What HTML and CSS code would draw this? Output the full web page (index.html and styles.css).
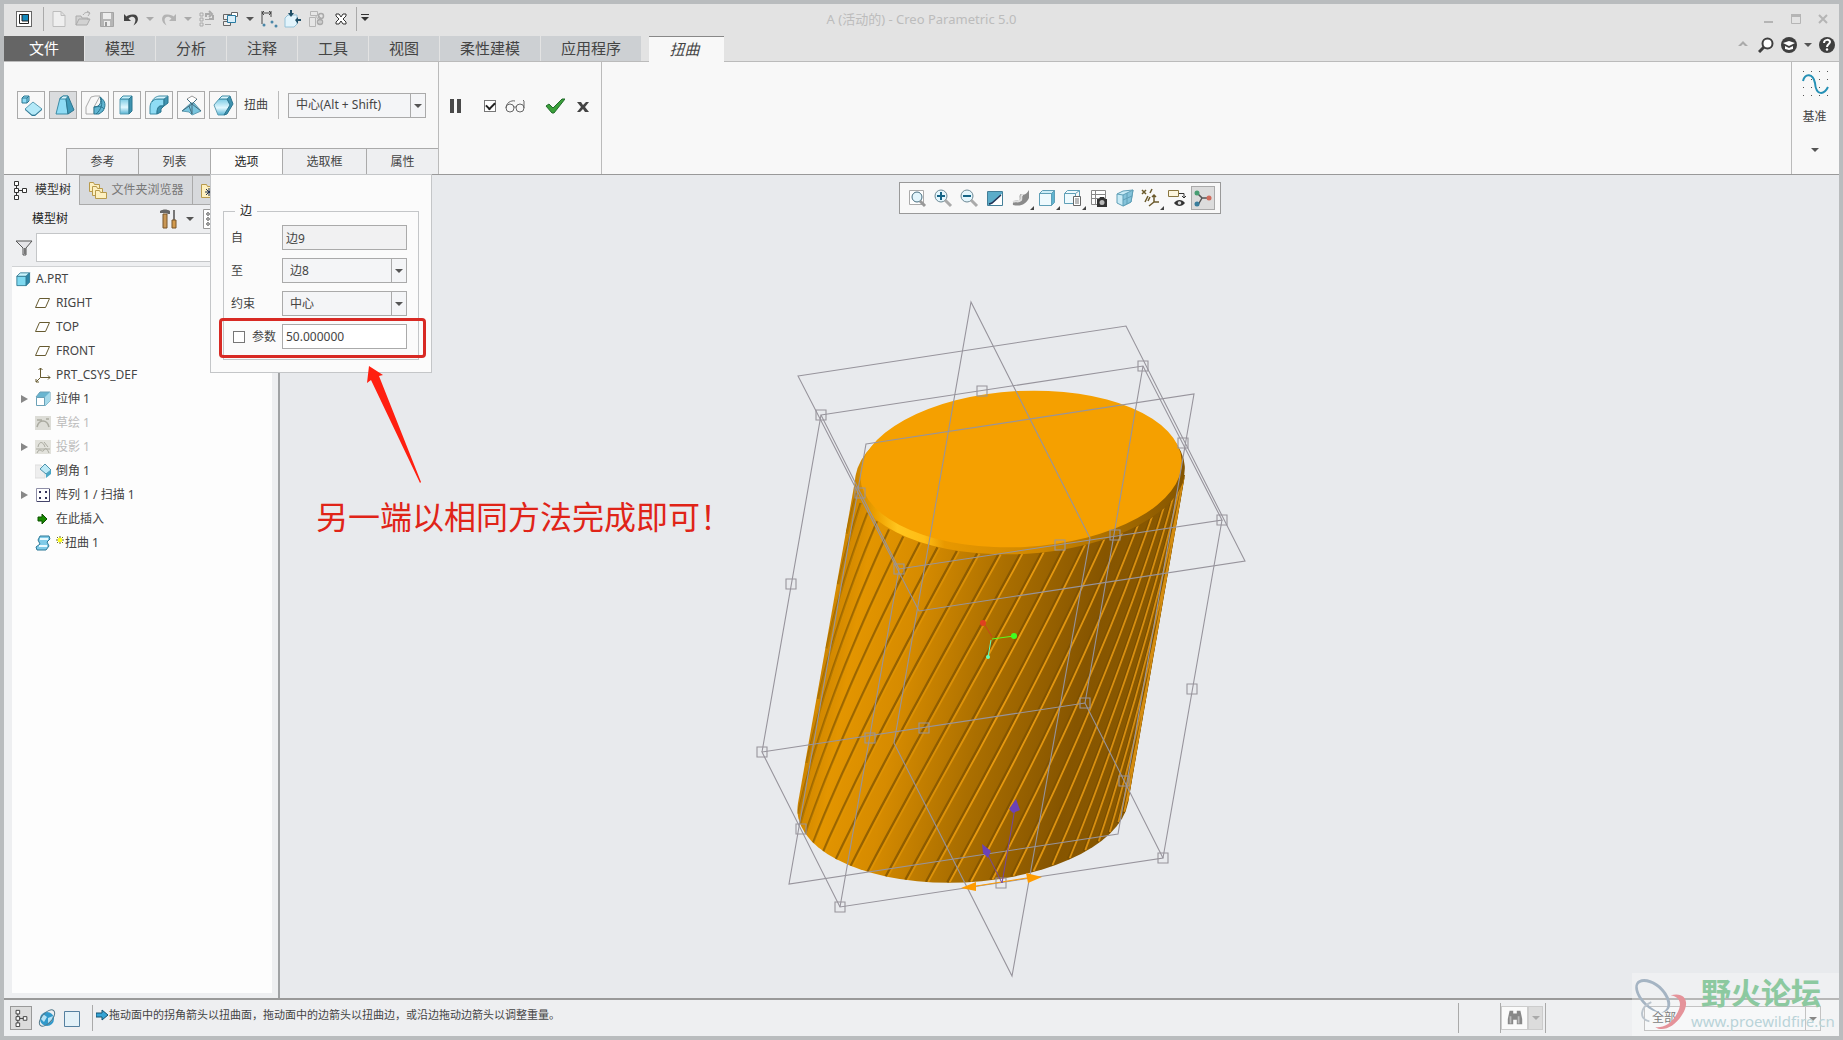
FILE: index.html
```html
<!DOCTYPE html>
<html lang="zh-CN">
<head>
    <meta charset="UTF-8">
    <meta name="viewport" content="width=device-width, initial-scale=1.0">
    <title>A (活动的) - Creo Parametric 5.0</title>
    <link rel="stylesheet" href="styles.css">
</head>
<body>
    <header class="titlebar">
        <div class="quick-access">
            <button class="qa-btn logo" aria-label="Creo"><svg viewBox="0 0 18 18"><rect x="1.500" y="1.500" width="15" height="15" fill="#fff" stroke="#666"/><path d="M4 4h10v10H4z" fill="#222"/><path d="M7 4h7v7H7z" fill="#1489bd"/><path d="M4 4h3v7h7v3H4z" fill="#fff"/><path d="M4.500 4.500h9v9h-9zM7 4v7h7" fill="none" stroke="#222"/></svg></button>
            <span class="sep"></span>
            <button class="qa-btn" aria-label="新建"><svg viewBox="0 0 18 18"><path d="M3 1.500h8l4 4v11H3zM11 1.500v4h4" fill="#efefef" stroke="#bdbdbd"/></svg></button>
            <button class="qa-btn" aria-label="打开"><svg viewBox="0 0 18 18"><path d="M2 15V6h5l1 2h6v2M2 15l3-6h11l-3 6z" fill="#d2d2d2" stroke="#aaa"/><path d="M9 5c2-3 4-3 6-2M13 1l3 2-2 3" fill="none" stroke="#aaa"/></svg></button>
            <button class="qa-btn" aria-label="保存"><svg viewBox="0 0 18 18"><path d="M2.500 2.500h13v14h-13z" fill="#b6b6b6" stroke="#a5a5a5"/><path d="M5 3h8v6H5zM6 11h6v5H6z" fill="#ededed"/><path d="M7 12h2v4H7z" fill="#999"/></svg></button>
            <button class="qa-btn" aria-label="撤消"><svg viewBox="0 0 18 18"><path d="M2 4v7h7L6.500 8.500c4-4 9-1 6 5l-1 2c7-4 5-12-1-11-3 0-5 1-6 2z" fill="#444"/></svg></button>
            <button class="drop pale" aria-label="撤消列表"></button>
            <button class="qa-btn" aria-label="重做"><svg viewBox="0 0 18 18"><path d="M16 4v7H9l2.500-2.500c-4-4-9-1-6 5l1 2c-7-4-5-12 1-11 3 0 5 1 6 2z" fill="#b3b3b3"/></svg></button>
            <button class="drop pale" aria-label="重做列表"></button>
            <button class="qa-btn" aria-label="重新生成"><svg viewBox="0 0 18 18"><path d="M2 3h3v3H2zM2 8h3v3H2zM2 13h3v3H2zM7 9.500h6M7 14.500h6" fill="none" stroke="#aaa"/><path d="M8 7V4h4M11 1l3 3-3 3M15 5v4h-4" fill="none" stroke="#aaa" stroke-width="2"/></svg></button>
            <button class="qa-btn" aria-label="窗口"><svg viewBox="0 0 18 18"><path d="M1.500 4.500h7v5h-7zM1.500 11.500h7v4h-7z" fill="#eee" stroke="#666"/><path d="M9.500 2.500h6v4h-6z" fill="#fff" stroke="#666"/><path d="M5.500 5.500h8v7h-8z" fill="#d9effa" stroke="#287ba2"/></svg></button>
            <button class="drop" aria-label="窗口列表"></button>
            <button class="qa-btn" aria-label="测量"><svg viewBox="0 0 18 18"><path d="M2 1v13M11 1v6M2 3h9M4 1L2 3l2 2M9 1l2 2-2 2" fill="none" stroke="#444"/><g fill="#4b87a8"><circle cx="4" cy="15" r="1.500"/><circle cx="12" cy="12" r="1.500"/><circle cx="16" cy="16" r="1.500"/></g></svg></button>
            <button class="qa-btn" aria-label="插入"><svg viewBox="0 0 18 18"><path d="M1 8l3-3h9v9l-3 3H1z" fill="#e2f4fc" stroke="#95c2d8"/><path d="M6 0v3H4l3 4 3-4H8V0zM17 9h-3V7l-3 3 3 4v-3h3z" fill="#1f4e66"/></svg></button>
            <button class="qa-btn" aria-label="参考"><svg viewBox="0 0 18 18"><path d="M2.500 1.500h7v4h-7zM1.500 7.500h6v9h-6zM9 12l3-3v6zM10 5l4 4M7 5l3 4" fill="#e6e6e6" stroke="#b5b5b5"/><circle cx="13" cy="6" r="2.500" fill="none" stroke="#aaa" stroke-width="1.500"/><circle cx="12" cy="12" r="2.500" fill="none" stroke="#aaa" stroke-width="1.500"/></svg></button>
            <button class="qa-btn" aria-label="关闭"><svg viewBox="0 0 18 18"><path d="M4 4h3l2 3 2-3h3v2l-3 3 3 3v2h-3l-2-3-2 3H4v-2l3-3-3-3z" fill="#fff" stroke="#333"/></svg></button>
            <span class="sep"></span>
            <button class="drop line" aria-label="自定义"></button>
        </div>
        <h1 class="title">A (活动的) - Creo Parametric 5.0</h1>
        <div class="window-buttons">
            <button aria-label="最小化"><svg viewBox="0 0 12 12"><path d="M1 8h9v2H1z" fill="#b5b5b5"/></svg></button>
            <button aria-label="最大化"><svg viewBox="0 0 12 12"><path d="M1.500 2.500h9v8h-9z" fill="none" stroke="#b5b5b5"/><path d="M1 1h10v3H1z" fill="#b5b5b5"/></svg></button>
            <button aria-label="关闭窗口"><svg viewBox="0 0 12 12"><path d="M2 2l8 8M10 2l-8 8" stroke="#b5b5b5" stroke-width="2"/></svg></button>
        </div>
    </header>

    <nav class="tabs">
        <button class="tab file">文件</button>
        <button class="tab">模型</button>
        <button class="tab">分析</button>
        <button class="tab">注释</button>
        <button class="tab">工具</button>
        <button class="tab">视图</button>
        <button class="tab wide">柔性建模</button>
        <button class="tab wide">应用程序</button>
        <button class="tab active">扭曲</button>
        <div class="help">
            <button aria-label="折叠"><svg viewBox="0 0 16 16"><path d="M3 9l5-5 5 5h-3L8 7 6 9z" fill="#aaa"/></svg></button>
            <button aria-label="搜索"><svg viewBox="0 0 16 16"><circle cx="9.500" cy="6.500" r="5" fill="#fff" stroke="#3f3f3f" stroke-width="2"/><path d="M6 10l-5 5" stroke="#3f3f3f" stroke-width="3"/></svg></button>
            <button aria-label="学习"><svg viewBox="0 0 16 16"><circle cx="8" cy="8" r="8" fill="#3f3f3f"/><path d="M2 6l6-2 6 2-6 3zM4 9l4 2 4-2v3l-4 1-4-1z" fill="#fff"/></svg></button>
            <button class="drop" aria-label="学习列表"></button>
            <button aria-label="帮助"><svg viewBox="0 0 16 16"><circle cx="8" cy="8" r="8" fill="#3f3f3f"/><path d="M5 6c0-4 6-4 6-1 0 2-3 2-3 5" fill="none" stroke="#fff" stroke-width="2"/><circle cx="8" cy="12.500" r="1.200" fill="#fff"/></svg></button>
        </div>
    </nav>

    <section class="ribbon">
        <div class="group warp">
            <div class="tools">
                <button class="tool" aria-label="变换"><svg viewBox="0 0 26 26"><path d="M4 6l2-2h5v5l-2 2H4z" fill="#8fdcf5" stroke="#2b7690"/><path d="M4 6h5v5M9 6l2-2" fill="none" stroke="#2b7690"/><path d="M7 17l8-7 9 7-7 6h-3z" fill="#b4e9f8" stroke="#5d9db3"/><path d="M7 17v1l7 6h3l7-6v-1l-7 6h-3z" fill="#2d7896"/></svg></button>
                <button class="tool on" aria-label="扭曲"><svg viewBox="0 0 26 26"><path d="M6 22l4-16 3-2h5l-2 3 2 15z" fill="#8fdcf5" stroke="#3d8ba5"/><path d="M16 7l2-3 6 14-6 4z" fill="#3f9ab9" stroke="#2b7690"/><path d="M10 7l3-3h5l-2 3z" fill="#d8f5fd" stroke="#3d8ba5"/></svg></button>
                <button class="tool" aria-label="骨架"><svg viewBox="0 0 26 26"><path d="M4 15l5-10 4-1h5l-6 11v7H4z" fill="#f8f8f8" stroke="#aaa"/><path d="M18 5c6 4 6 9 3 14l-4 3h-5v-7c6 0 8-5 6-10z" fill="#62b6d2" stroke="#2b7690"/><path d="M12 15c6-1 9 0 10 2M19 6c2 6 0 12-5 16" fill="none" stroke="#2b7690"/></svg></button>
                <button class="tool" aria-label="拉伸"><svg viewBox="0 0 26 26"><path d="M6 7h9v15H6z" fill="url(#shine)" stroke="#5d9db3"/><path d="M6 7l3-3h9l-3 3z" fill="#c5f0fb" stroke="#3d8ba5"/><path d="M15 7l3-3v15l-3 3z" fill="#3f93b0" stroke="#2b7690"/></svg></button>
                <button class="tool" aria-label="折弯"><svg viewBox="0 0 26 26"><path d="M4 22v-6c0-6 3-9 8-9h6v7h-3c-3 0-4 3-4 8z" fill="#8fdcf5" stroke="#3d8ba5"/><path d="M18 7l4-3v7l-4 3zM11 22c0-5 1-8 4-8h3l-3 3v3z" fill="#3f93b0" stroke="#2b7690"/><path d="M6 10c1-4 5-6 8-6h8l-4 3h-6c-3 0-5 1-6 3z" fill="#d8f5fd" stroke="#3d8ba5"/></svg></button>
                <button class="tool" aria-label="扭转"><svg viewBox="0 0 26 26"><path d="M9 7l5-3 5 3-5 5z" fill="#fff" stroke="#999"/><path d="M4 19l9-8 3 0 7 8-9 4-3-3z" fill="#79c5de" stroke="#5d9db3"/><path d="M9 7l5 5v10M19 7l-5 5 9 7M14 12L4 19M11 14l3 8" fill="none" stroke="#436d7e"/></svg></button>
                <button class="tool" aria-label="雕刻"><svg viewBox="0 0 26 26"><path d="M4 13l5-6h8l4 6-4 8-3 2H8z" fill="url(#shine)" stroke="#5d9db3"/><path d="M17 7l3-3 3 8-6 10-3 1 6-10z" fill="#3f93b0" stroke="#2b7690"/><path d="M9 7l3-3h8l-3 3z" fill="#d8f5fd" stroke="#3d8ba5"/></svg></button>
                <span class="tool-label">扭曲</span>
                <span class="tool-sep"></span>
                <span class="combo main-combo"><select aria-label="扭曲方式"><option>中心(Alt + Shift)</option></select></span>
            </div>
            <div class="subtabs">
                <button class="subtab">参考</button>
                <button class="subtab">列表</button>
                <div class="subtab-holder">
                    <button class="subtab active">选项</button>
                    <div class="popup">
                        <fieldset>
                            <legend>边</legend>
                            <label for="from">自</label>
                            <input id="from" class="field readonly" type="text" value="边9" readonly>
                            <label for="to">至</label>
                            <span class="combo"><select id="to"><option>边8</option></select></span>
                            <label for="constraint">约束</label>
                            <span class="combo"><select id="constraint"><option>中心</option></select></span>
                            <label class="check" for="use-param"><input id="use-param" type="checkbox">参数</label>
                            <input class="field" type="text" value="50.000000" aria-label="参数值">
                        </fieldset>
                        <div class="red-box"></div>
                    </div>
                </div>
                <button class="subtab three">选取框</button>
                <button class="subtab">属性</button>
            </div>
        </div>
        <div class="group confirm">
            <button aria-label="暂停"><svg viewBox="0 0 20 20"><path d="M4 3h4v14H4zM11 3h4v14h-4z" fill="#4a4a4a"/></svg></button>
            <label class="preview"><input type="checkbox" checked aria-label="预览"><svg viewBox="0 0 20 20"><g fill="none" stroke="#666"><circle cx="5" cy="12" r="4"/><circle cx="15" cy="12" r="4"/><path d="M9 11h2M1 12c0-5 5-8 9-7M19 12V5l-1-1"/></g></svg></label>
            <button class="ok" aria-label="确定"><svg viewBox="0 0 20 20"><path d="M1 10l3-2 4 4 9-9h3L9 17H7z" fill="#3aa03a" stroke="#216b2b"/></svg></button>
            <button aria-label="取消"><svg viewBox="0 0 20 20"><path d="M4 6h4l2 3 3-3h3l-4 5 4 5h-4l-2-3-3 3H4l4-5z" fill="#444"/></svg></button>
        </div>
        <div class="group datum">
            <svg class="datum-icon" viewBox="0 0 28 30"><g fill="#555"><path d="M2 2h1v1H2zM10 2h1v1h-1zM18 2h1v1h-1zM26 2h1v1h-1zM2 10h1v1H2zM10 10h1v1h-1zM18 10h1v1h-1zM26 10h1v1h-1zM2 18h1v1H2zM10 18h1v1h-1zM18 18h1v1h-1zM26 18h1v1h-1zM2 26h1v1H2zM10 26h1v1h-1zM18 26h1v1h-1zM26 26h1v1h-1z"/></g><path d="M2 12c2-8 10-8 12 2 1 13 9 12 13 4" fill="none" stroke="#2590b5" stroke-width="2"/></svg>
            <button class="datum-btn">基准</button>
            <button class="drop" aria-label="基准列表"></button>
        </div>
    </section>

    <main class="work">
        <aside class="side">
            <div class="side-tabs">
                <button class="side-tab active"><svg viewBox="0 0 16 20"><use href="#tree-icon"/></svg>模型树</button>
                <button class="side-tab folder"><svg viewBox="0 0 20 20"><g fill="#fdf0c0" stroke="#b89a4c"><path d="M1.500 2.500h4l1 2h5v7h-10z"/><path d="M4.500 6.500h4l1 2h5v7h-10z"/><path d="M7.500 10.500h4l1 2h6v6h-11z"/></g></svg>文件夹浏览器</button>
                <button class="side-tab last" aria-label="收藏夹"><svg viewBox="0 0 20 20"><path d="M.500 4.500h5l1 2h9v11h-15z" fill="#fdf0c0" stroke="#b89a4c"/><path d="M8 8v8M4 12h8M5 9l6 6M11 9l-6 6" stroke="#235"/></svg></button>
            </div>
            <div class="side-head">
                <h2>模型树</h2>
                <button aria-label="设置"><svg viewBox="0 0 18 20"><path d="M1 2c3-2 7-2 10 0v3H9L7 4H1z" fill="#666"/><path d="M4 5h4v14H4z" fill="#c99755" stroke="#76542a"/><path d="M14 1h2v10h-2z" fill="#777"/><path d="M13 11h4v8h-4z" fill="#d39a4c" stroke="#76542a"/></svg></button>
                <button class="drop" aria-label="设置列表"></button>
                <button class="show" aria-label="显示"><svg viewBox="0 0 18 20"><path d="M.500.500h16v19H.500z" fill="#fff" stroke="#999"/><g fill="none" stroke="#555"><circle cx="5" cy="5" r="1.300"/><circle cx="5" cy="10" r="1.300"/><circle cx="5" cy="15" r="1.300"/></g></svg></button>
            </div>
            <div class="filter">
                <svg viewBox="0 0 18 18"><path d="M1 2h16l-6 7v7H8V9z" fill="#e4e4e8" stroke="#555"/><path d="M9 9h2v6H9z" fill="#777"/></svg>
                <input type="text" aria-label="过滤">
            </div>
            <ul class="tree">
                <li class="root"><svg viewBox="0 0 16 16"><use href="#cube" transform="translate(1 1) scale(.85)"/></svg>A.PRT</li>
                <li><svg viewBox="0 0 16 16"><use href="#plane"/></svg>RIGHT</li>
                <li><svg viewBox="0 0 16 16"><use href="#plane"/></svg>TOP</li>
                <li><svg viewBox="0 0 16 16"><use href="#plane"/></svg>FRONT</li>
                <li><svg viewBox="0 0 16 16"><path d="M5.500 1v9.500H15M5.500 10.500L1 15M3.500 3l2-2 2 2M13 8.500l2 2-2 2M1 12v3h3" fill="none" stroke="#665a30"/></svg>PRT_CSYS_DEF</li>
                <li class="parent"><svg viewBox="0 0 16 16"><path d="M1 6l4-5h10v9l-5 5z" fill="#69b5d0" stroke="#6ba1b7"/><path d="M1.500 6.500h8v8h-8z" fill="#fff" stroke="#6ba1b7"/><path d="M10 6l5-5v9l-5 5z" fill="#a5d9ea"/></svg>拉伸 1</li>
                <li class="muted"><svg viewBox="0 0 16 16"><path d="M0 1h16v14H0z" fill="#ddddd7"/><path d="M2 12c2-8 10-8 12 0M2 5h5M11 4h3" fill="none" stroke="#aaaaa0" stroke-width="1.500"/></svg>草绘 1</li>
                <li class="parent muted"><svg viewBox="0 0 16 16"><path d="M0 1h16v14H0z" fill="#e2e2dc"/><path d="M3 8c1-6 5-6 7 0M2 14c3-7 5 1 7-3s4 1 5 3M9 3l4 5M1 10h14" fill="none" stroke="#aaaaa0"/></svg>投影 1</li>
                <li><svg viewBox="0 0 16 16"><path d="M0 2h6l4 4v9H0z" fill="#eee" stroke="#ddd"/><path d="M5 6l5-5 6 6-5 4z" fill="#bdeaf7" stroke="#4d93ad"/><path d="M11 11l5-4v4l-5 4z" fill="#4ba7c6"/></svg>倒角 1</li>
                <li class="parent"><svg viewBox="0 0 16 16"><path d="M1.500 1.500h13v13h-13z" fill="#fff" stroke="#8d8da6"/><path d="M14.500 2v12.500H2" fill="none" stroke="#44446a"/><path d="M4 4h2v2H4zM10 4h2v2h-2zM4 10h2v2H4zM10 10h2v2h-2z" fill="#34345c"/></svg>阵列 1 / 扫描 1</li>
                <li><svg viewBox="0 0 16 16"><path d="M3 6h4V3l5 5-5 5v-3H3z" fill="#188a00" stroke="#0c5200"/></svg>在此插入</li>
                <li><svg viewBox="0 0 16 16"><path d="M5 1h9l1 3-3 3 2 4-3 4H2l-1-3 4-3-2-4z" fill="#7fcbe8" stroke="#2d7896"/><path d="M5 4h8M4 11h8" stroke="#e8faff" stroke-width="2"/></svg><svg class="star" viewBox="0 0 8 8"><path d="M4 0v8M0 4h8M1 1l6 6M7 1L1 7" stroke="#77770a"/><path d="M2 2h4v4H2z" fill="#ffff20"/></svg>扭曲 1</li>
            </ul>
        </aside>

        <section class="canvas">
            <svg class="scene" viewBox="280 175 1559 823" role="img" aria-label="圆柱模型">
                <defs>
                    <linearGradient id="shine" x1="0" y1="0" x2="0" y2="1"><stop offset="0" stop-color="#7ccbe4"/><stop offset=".55" stop-color="#e2f8ff"/><stop offset="1" stop-color="#57b4d4"/></linearGradient>
                    <linearGradient id="body-fill" gradientUnits="userSpaceOnUse" x1="856" y1="475" x2="1175" y2="530">
                        <stop offset="0" stop-color="#ce8500"/><stop offset=".08" stop-color="#e39500"/><stop offset=".25" stop-color="#d68b00"/>
                        <stop offset=".5" stop-color="#ab6f00"/><stop offset=".8" stop-color="#865500"/><stop offset="1" stop-color="#8a5900"/>
                    </linearGradient>
                    <linearGradient id="rim-fill" gradientUnits="userSpaceOnUse" x1="855" y1="0" x2="1186" y2="0">
                        <stop offset="0" stop-color="#c98300"/><stop offset=".06" stop-color="#efa200"/><stop offset=".12" stop-color="#ffc51e"/>
                        <stop offset=".2" stop-color="#ffbd15"/><stop offset=".26" stop-color="#e89800"/><stop offset=".55" stop-color="#cf8700"/>
                        <stop offset=".8" stop-color="#a26900"/><stop offset="1" stop-color="#835400"/>
                    </linearGradient>
                    <linearGradient id="groove" gradientUnits="userSpaceOnUse" x1="856" y1="475" x2="1175" y2="530">
                        <stop offset="0" stop-color="#a06900"/><stop offset=".5" stop-color="#875700"/><stop offset="1" stop-color="#774c00"/>
                    </linearGradient>
                    <linearGradient id="ridge" gradientUnits="userSpaceOnUse" x1="856" y1="475" x2="1175" y2="530">
                        <stop offset="0" stop-color="#e89a00" stop-opacity=".3"/><stop offset=".35" stop-color="#e89a0a" stop-opacity=".6"/>
                        <stop offset=".55" stop-color="#e89a10"/><stop offset="1" stop-color="#d48c10"/>
                    </linearGradient>
                    <clipPath id="body-clip"><path d="M856 475L798 803A165 79 -3 0 0 1128 803L1185 475A165 79 -3 0 1 856 475z"/></clipPath>
                    <g id="cube"><path d="M1 5h11v11H1z" fill="#7fd9f0" stroke="#2b7690"/><path d="M1 5l4-4h11l-4 4z" fill="#c9f3fb" stroke="#2b7690"/><path d="M12 5l4-4v11l-4 4z" fill="#2d86a8" stroke="#2b7690"/></g>
                    <path id="plane" d="M4.500 3.500h10l-4 9h-10z" fill="#fff" stroke="#665a30"/>
                    <path id="tree-icon" d="M2.500 1.500h4v4h-4zM2.500 8.500h4v4h-4zM2.500 15.500h4v4h-4zM10.500 8.500h4v4h-4zM4.500 5.500v3M4.500 12.500v3M6.500 10.500h4" fill="#fff" stroke="#333"/>
                </defs>
                <path d="M856 475L798 803A165 79 -3 0 0 1128 803L1185 475z" fill="url(#body-fill)"/>
                <ellipse cx="1020" cy="475" rx="165" ry="79" transform="rotate(-3 1020 475)" fill="url(#rim-fill)"/>
                <g clip-path="url(#body-clip)" fill="none">
                    <path id="grooves" stroke="url(#groove)" stroke-width="2.400"/>
                    <path id="ridges" stroke="url(#ridge)" stroke-width="1.800"/>
                </g>
                <ellipse cx="1021" cy="469" rx="161" ry="78" transform="rotate(-3 1021 469)" fill="#f5a000"/>
                <!-- datum planes and warp box -->
                <g fill="none" stroke="#97949c" stroke-width="1.100">
                    <path d="M798 376L1126 326L1245 561L919 611z"/>
                    <path d="M866 444L1194 394L1118 834L789 884z"/>
                    <path d="M971 302L1090 538L1012 976L894 743z"/>
                    <path d="M821 415L1143 366L1222 520L899 569z"/>
                    <path d="M762 752L1085 703L1163 858L840 907z"/>
                    <path d="M821 415L762 752M1143 366L1085 703M1222 520L1163 858M899 569L840 907"/>
                    <path id="handles"/>
                </g>
                <path d="M970 887L1033 877" stroke="#ff9c00"/>
                <path d="M961 888l15-6v9zM1042 877l-16-4 2 10z" fill="#ff9c00"/>
                <path d="M1002 883L1015 808M1002 883L988 855" stroke="#7446a0"/>
                <path d="M1016 799l4 11-7 3-4-4zM982 844l9 7-3 7-5-5z" fill="#6b42b8"/>
                <path d="M983 622l9 15" stroke="#c8451c"/><circle cx="983" cy="623" r="3" fill="#e04020"/>
                <path d="M1014 636l-22 3" stroke="#5aff20"/><circle cx="1014" cy="636" r="3" fill="#40ff20"/>
                <path d="M991 640l-3 17" stroke="#60ffb8"/><circle cx="988" cy="657" r="2" fill="#60ffb8"/>
            </svg>

            <div class="view-bar">
                <button aria-label="重新调整"><svg viewBox="0 0 20 20"><path d="M2.500 2.500h14v14h-14z" fill="#fff" stroke="#aaa"/><circle cx="10" cy="9" r="5" fill="#e4f6fd" stroke="#456c7e"/><path d="M13 13l5 5" stroke="#999" stroke-width="3"/></svg></button>
                <button aria-label="放大"><svg viewBox="0 0 20 20"><circle cx="8" cy="8" r="6" fill="#e4f6fd" stroke="#6d8995"/><path d="M12 12l6 6" stroke="#aaa" stroke-width="3"/><path d="M8 4v8M4 8h8" stroke="#146486" stroke-width="2"/></svg></button>
                <button aria-label="缩小"><svg viewBox="0 0 20 20"><circle cx="8" cy="8" r="6" fill="#e4f6fd" stroke="#6d8995"/><path d="M12 12l6 6" stroke="#aaa" stroke-width="3"/><path d="M4 8h8" stroke="#146486" stroke-width="2"/></svg></button>
                <button aria-label="重画"><svg viewBox="0 0 20 20"><path d="M2.500 3.500h15v14h-15z" fill="#e9f6fb" stroke="#447f98"/><path d="M3 4h14v2L5 17H3z" fill="#5cacc9"/><path d="M17 6v11H6z" fill="#fff"/><path d="M16 7L7 15l-3 1" fill="none" stroke="#235" stroke-width="1.500"/></svg></button>
                <button class="more" aria-label="渲染"><svg viewBox="0 0 20 20"><path d="M10 6c4 2 6-1 8-4v8c-3 6-8 9-16 7-1-4 3-6 6-4 2-3-1-5 2-7z" fill="#8a8a8a"/><path d="M2 14c3-2 5 1 8-2 1-2-1-5 2-5" stroke="#e0e0e0" stroke-width="2" fill="none"/></svg></button>
                <button class="more" aria-label="显示样式"><svg viewBox="0 0 20 20"><path d="M2.500 5.500h12v12h-12z" fill="#eefafe" stroke="#5f9fb7"/><path d="M2.500 5.500l3-3h12l-3 3z" fill="#cdeef8" stroke="#5f9fb7"/><path d="M14.500 5.500l3-3v12l-3 3z" fill="#5fb3cf" stroke="#5f9fb7"/></svg></button>
                <button class="more" aria-label="已保存方向"><svg viewBox="0 0 20 20"><path d="M1.500 5.500h11v10h-11zM1.500 5.500l3-3h12l-4 3M16.500 2.500v8" fill="#eefafe" stroke="#5f9fb7"/><path d="M10.500 8.500h7v9h-7z" fill="#fff" stroke="#666"/><path d="M12 11h4M12 13h4M12 15h4" stroke="#777"/></svg></button>
                <button aria-label="视图管理器"><svg viewBox="0 0 20 20"><path d="M2.500 2.500h14v14h-14zM2 6.500h15M2 10.500h15M6.500 2v14" fill="#fff" stroke="#888"/><path d="M8 11h2l1-2h4l1 2h2v8H8z" fill="#333"/><circle cx="13" cy="14.500" r="2.500" fill="#bbb"/></svg></button>
                <button aria-label="透视图"><svg viewBox="0 0 20 20"><path d="M2 6l6-3 10-1-2 12-8 4-6-3z" fill="#c9ebf6" stroke="#5f9fb7"/><path d="M8 7l10-5-2 12-8 4z" fill="#85c3da" stroke="#5f9fb7"/><path d="M2 6l6 1M12 5v11M8 12l9-4" stroke="#5f9fb7"/></svg></button>
                <button class="more" aria-label="基准显示"><svg viewBox="0 0 20 20"><g fill="none" stroke="#6b5a2c" stroke-width="1.500"><path d="M1 2l4 4M5 2L1 6M11 1l-2 4M7 8l-3 6M9 9l-2 4M13 7v7h5M13 14l-5 4M11 9l2-2 2 2"/></g></svg></button>
                <button aria-label="注释显示"><svg viewBox="0 0 20 20"><path d="M1.500 2.500h10v6h-10z" fill="#fdf6df" stroke="#8a7640"/><path d="M12 5.500h5v4M15 8l2 2 2-2" fill="none" stroke="#333"/><path d="M7 15c3-4 8-4 11 0-3 4-8 4-11 0z" fill="#333"/><circle cx="12.500" cy="15" r="1.800" fill="#ddd"/></svg></button>
                <button class="on" aria-label="旋转中心"><svg viewBox="0 0 20 20"><path d="M4 5l5 5-4 7M9 10h7" fill="none" stroke="#555" stroke-width="1.500"/><circle cx="4" cy="5" r="2.500" fill="#479d72"/><circle cx="4" cy="16" r="2.500" fill="#397d9c"/><circle cx="16" cy="10" r="2.500" fill="#d06b5c"/></svg></button>
            </div>

            <div class="note">
                <svg viewBox="0 0 60 120"><path d="M5 0L3 17l4-3 49 103 1-1L15 10l4-1z" fill="#ff1f10"/></svg>
                <p>另一端以相同方法完成即可<span class="mark">！</span></p>
            </div>
        </section>
    </main>

    <footer class="status">
        <div class="status-icons">
            <button class="on" aria-label="模型树"><svg viewBox="0 0 16 20"><use href="#tree-icon"/></svg></button>
            <button aria-label="浏览器"><svg viewBox="0 0 20 20"><circle cx="10" cy="11" r="7" fill="#3199cb"/><path d="M6 6l4 3-3 5-3-3zM11 10l5-2-1 5-4 3z" fill="#b5e2f5"/><ellipse cx="10" cy="10" rx="10" ry="5" transform="rotate(-48 10 10)" fill="none" stroke="#51788a"/></svg></button>
            <button aria-label="全屏"><svg viewBox="0 0 20 20"><path d="M2.500 3.500h15v15h-15z" fill="#e3f1f8" stroke="#5580a0"/></svg></button>
        </div>
        <p class="message"><svg viewBox="0 0 12 12"><path d="M0 4h6V1l6 5-6 5V8H0z" fill="#35a3d4" stroke="#15516e"/></svg>拖动面中的拐角箭头以扭曲面，拖动面中的边箭头以扭曲边，或沿边拖动边箭头以调整重量。</p>
        <div class="find">
            <button aria-label="查找"><svg viewBox="0 0 20 20"><path d="M4 2h4v3h4V2h4l2 9v6h-6v-5H8v5H2v-6z" fill="#888"/><path d="M4 8h2v8H4zM13 8h2v8h-2z" fill="#bbb"/></svg></button>
            <button class="find-drop" aria-label="查找列表"><span class="drop pale"></span></button>
        </div>
        <span class="combo filter-combo"><select aria-label="选择过滤器"><option>全部</option></select></span>
        <div class="watermark">
            <svg viewBox="0 0 60 58"><path d="M29 38C14 36 0 18 4 8s26-4 34 14c4 9 0 16-8 16 8-3 8-10 4-17C27 7 8 2 6 10c-1 8 8 21 23 28z" fill="#a5b4c3"/><path d="M20 27c-12 5-13 18-2 20" fill="none" stroke="#bcc5ce" stroke-width="2"/><path d="M40 20c16-4 20 8 12 20-8 13-20 18-28 13 9 1 17-4 22-13 6-10 5-18-6-20z" fill="#e5939a"/></svg>
            <div class="watermark-text"><strong>野火论坛</strong><span>www.proewildfire.cn</span></div>
        </div>
    </footer>

    <script src="script.js"></script>
</body>
</html>
```
FILE: styles.css
```css
* {
    box-sizing: border-box;
}
body {
    margin: 0;
    min-height: 100vh;
    display: flex;
    flex-direction: column;
    border: 4px solid #b9bcbe;
    background-color: #eeeff1;
    color: #444;
    font-family: "Noto Sans", "Noto Sans CJK SC", sans-serif;
    font-size: 12px;
    line-height: 16px;
}
button {
    display: flex;
    align-items: center;
    justify-content: center;
    margin: 0;
    padding: 0;
    border: 0;
    background: none;
    color: inherit;
    font: inherit;
    white-space: nowrap;
}
h1, h2, p, ul {
    margin: 0;
    padding: 0;
    font-size: inherit;
    font-weight: normal;
}
svg {
    display: block;
    flex: none;
}
.drop {
    display: flex;
    flex: none;
    align-items: center;
    justify-content: center;
    width: 8px;
    height: 8px;
}
.drop::after {
    content: "";
    border: 4px solid transparent;
    border-top-color: #555;
    border-bottom: 0;
}
.drop.pale::after {
    border-top-color: #aaa;
}
.drop.line::after {
    width: 8px;
    border-top-color: #333;
    box-shadow: 0 -2px #e3e3e3, 0 -3px #333;
}

/* title bar */
.titlebar {
    display: grid;
    grid-template-columns: 1fr auto 1fr;
    align-items: center;
    height: 32px;
    padding-bottom: 3px;
    background-color: #e3e3e3;
}
.quick-access {
    display: flex;
    align-items: center;
    gap: 6px;
    padding-left: 11px;
    height: 28px;
}
.qa-btn svg {
    width: 18px;
    height: 18px;
}
.sep {
    width: 1px;
    height: 24px;
    margin-right: -2px;
    background-color: #aaa;
}
.logo + .sep {
    margin: 0 0 0 4px;
}
.title {
    color: #bcbcbc;
    font-size: 13px;
}
.window-buttons {
    display: flex;
    justify-content: flex-end;
    gap: 15px;
    padding-right: 10px;
}
.window-buttons svg {
    width: 12px;
    height: 12px;
}

/* ribbon tabs */
.tabs {
    display: flex;
    gap: 1px;
    height: 26px;
    background-color: #e3e3e3;
    border-bottom: 1px solid #bbb;
}
.tab {
    width: 70px;
    height: 25px;
    background-color: #cdd0d3;
    font-size: 15px;
    padding-bottom: 2px;
}
.tab.file {
    width: 80px;
    background-color: #656565;
    color: #fff;
}
.tab.wide {
    width: 100px;
}
.tab.active {
    width: 75px;
    height: 26px;
    margin-left: 7px;
    padding-right: 4px;
    background-color: #f8f8f8;
    border-top: 1px solid #888;
    font-style: italic;
}
.help {
    display: flex;
    align-items: center;
    gap: 7px;
    margin-left: auto;
    padding: 0 4px 8px 0;
}
.help svg {
    width: 16px;
    height: 16px;
}

/* ribbon */
.ribbon {
    display: flex;
    height: 113px;
    background-color: #f8f8f8;
    border-bottom: 1px solid #999;
}
.group {
    border-right: 1px solid #bbb;
}
.warp {
    display: flex;
    flex-direction: column;
    justify-content: space-between;
    width: 435px;
    padding-top: 29px;
}
.tools {
    display: flex;
    align-items: center;
    gap: 4px;
    padding-left: 13px;
}
.tool {
    width: 28px;
    height: 28px;
    border: 1px solid #aaa;
}
.tool.on {
    background-color: #dadcde;
}
.tool svg {
    width: 26px;
    height: 26px;
}
.tool-label {
    margin-left: 3px;
}
.tool-sep {
    width: 1px;
    height: 28px;
    margin: 0 5px 0 6px;
    background-color: #bbb;
}
.combo {
    position: relative;
    display: block;
    height: 25px;
}
.combo select {
    width: 100%;
    height: 25px;
    padding: 0 20px 0 7px;
    border: 1px solid #aaa;
    border-radius: 0;
    background-color: #f4f5f7;
    color: #444;
    font: inherit;
    appearance: none;
}
.combo::before {
    content: "";
    position: absolute;
    top: 0;
    right: 15px;
    width: 1px;
    height: 100%;
    background-color: #aaa;
}
.combo::after {
    content: "";
    position: absolute;
    top: 11px;
    right: 4px;
    border: 4px solid transparent;
    border-top-color: #555;
    border-bottom: 0;
}
.main-combo {
    width: 138px;
}
.subtabs {
    display: flex;
    padding-left: 62px;
}
.subtab {
    width: 72px;
    height: 26px;
    border: 1px solid #aaa;
    border-bottom: 0;
    border-right: 0;
    background-color: #eeeff1;
}
.subtab.three {
    width: 84px;
}
.subtab.active {
    background-color: #fcfcfc;
    color: #222;
}
.subtab-holder {
    position: relative;
}

/* options panel dropping from its tab */
.popup {
    position: absolute;
    top: 100%;
    left: 0;
    z-index: 2;
    width: 222px;
    padding: 28px 12px 12px;
    border: 1px solid #c4c6c8;
    background-color: #fbfbfb;
}
.popup fieldset {
    display: grid;
    grid-template-columns: 51px 1fr;
    align-items: center;
    gap: 8px 0;
    margin: 0;
    padding: 6px 11px 10px 7px;
    border: 1px solid #c4c6c8;
}
.popup legend {
    margin-left: 4px;
    padding: 0 5px;
    color: #222;
}
.field {
    width: 100%;
    height: 25px;
    padding: 0 3px;
    border: 1px solid #aaa;
    background-color: #fff;
    color: #444;
    font: inherit;
}
.field.readonly {
    background-color: #f1f1f2;
}
input[type="checkbox"] {
    width: 12px;
    height: 12px;
    margin: 0;
    border: 1px solid #777;
    background-color: #fff;
    appearance: none;
}
.check {
    display: flex;
    align-items: center;
    gap: 7px;
    margin-left: 2px;
}
.red-box {
    position: absolute;
    bottom: 14px;
    left: 8px;
    right: 5px;
    height: 40px;
    border: 3px solid #d82a24;
    border-radius: 4px;
    pointer-events: none;
}

.confirm {
    display: flex;
    align-items: flex-start;
    width: 163px;
    padding: 34px 0 0 7px;
}
.confirm svg {
    width: 20px;
    height: 20px;
}
.preview {
    display: flex;
    align-items: center;
    gap: 9px;
    margin-left: 18px;
}
.preview input:checked {
    display: grid;
    place-items: center;
}
.preview input:checked::before {
    content: "";
    width: 7px;
    height: 4px;
    margin-bottom: 2px;
    border: solid #222;
    border-width: 0 0 2px 2px;
    transform: rotate(-45deg);
}
.ok {
    margin: 0 8px 0 20px;
}
.datum {
    display: flex;
    flex-direction: column;
    align-items: center;
    width: 48px;
    margin-left: auto;
    padding: 7px 2px 0 0;
    border-left: 1px solid #bbb;
    border-right: 0;
}
.datum-icon {
    width: 28px;
    height: 30px;
}
.datum-btn {
    margin: 10px 0 21px;
}

/* model tree */
.work {
    display: flex;
    flex: 1;
}
.side {
    display: flex;
    flex-direction: column;
    width: 276px;
    padding: 0 6px 5px 0;
    border-right: 2px solid #a0a2a4;
    background-color: #eeeff1;
}
.side-tabs {
    display: flex;
    margin-right: -6px;
}
.side-tab {
    gap: 7px;
    height: 30px;
    border: 1px solid #aaa;
    border-right: 0;
    background-color: #d7d9dc;
    color: #777;
}
.side-tab svg {
    width: 20px;
    height: 20px;
}
.side-tab.active {
    width: 75px;
    border: 0;
    background: none;
    color: #333;
}
.side-tab.active svg {
    width: 16px;
}
.side-tab.folder {
    width: 113px;
    gap: 3px;
}
.side-tab.last {
    flex: 1;
    justify-content: flex-start;
    padding-left: 8px;
}
.side-head {
    display: flex;
    align-items: center;
    gap: 9px;
    height: 28px;
    padding-left: 28px;
}
.side-head h2 {
    flex: none;
    width: 118px;
    color: #222;
}
.side-head svg {
    width: 18px;
    height: 20px;
}
.filter {
    display: flex;
    align-items: center;
    gap: 3px;
    padding-left: 11px;
}
.filter svg {
    width: 18px;
    height: 18px;
}
.filter input {
    flex: 1;
    height: 29px;
    border: 1px solid #c4c6c8;
    background-color: #fff;
}
.tree {
    flex: 1;
    margin: 4px 0 0 8px;
    border-top: 1px solid #d0d2d4;
    background-color: #fdfdfd;
    list-style: none;
}
.tree li {
    display: flex;
    align-items: center;
    gap: 5px;
    height: 24px;
    padding-left: 23px;
}
.tree .root {
    padding-left: 3px;
}
.tree svg {
    width: 16px;
    height: 16px;
}
.tree .star {
    width: 8px;
    height: 8px;
    margin: 0 -4px 6px 0;
}
.tree .parent {
    padding-left: 9px;
}
.tree .parent::before {
    content: "";
    margin-right: 2px;
    border: 4px solid transparent;
    border-left: 7px solid #888;
    border-right: 0;
}
.tree .muted {
    color: #bbb;
}

/* model view */
.canvas {
    position: relative;
    flex: 1;
    background-color: #e8eaed;
}
.scene {
    width: 100%;
    height: 100%;
}
.view-bar {
    position: absolute;
    top: 7px;
    left: 50%;
    display: flex;
    gap: 2px;
    padding: 3px 5px;
    border: 1px solid #999;
    background-color: #f8f8f8;
    transform: translateX(-50%);
}
.view-bar button {
    position: relative;
    width: 24px;
    height: 24px;
    border: 1px solid transparent;
}
.view-bar svg {
    width: 20px;
    height: 20px;
}
.view-bar .on {
    border-color: #aaa;
    background-color: #dcdcdc;
}
.view-bar .more::after {
    content: "";
    position: absolute;
    right: -2px;
    bottom: -1px;
    border: 2px solid #444;
    border-top-color: transparent;
    border-left-color: transparent;
}
.note {
    position: absolute;
    top: 191px;
    left: 36px;
    z-index: 3;
    color: #e02418;
    font-size: 32px;
    line-height: 40px;
}
.note svg {
    width: 60px;
    height: 120px;
    margin: 0 0 9px 48px;
}
.note .mark {
    font-family: "Noto Sans CJK TC", sans-serif;
}

/* status bar */
.status {
    position: relative;
    display: flex;
    align-items: center;
    height: 38px;
    border-top: 2px solid #999;
    background-color: #eeeff1;
}
.status-icons {
    display: flex;
    align-items: center;
    gap: 5px;
    height: 26px;
    padding: 0 10px 0 6px;
    border-right: 1px solid #aaa;
}
.status-icons svg {
    width: 20px;
    height: 20px;
}
.status-icons .on {
    width: 22px;
    height: 24px;
    border: 1px solid #999;
    background-color: #dcdcdc;
}
.status-icons .on svg {
    height: 18px;
}
.message {
    display: flex;
    align-items: center;
    flex: 1;
    gap: 1px;
    padding: 0 0 6px 3px;
    font-size: 11px;
}
.message svg {
    width: 12px;
    height: 12px;
}
.find {
    display: flex;
    align-items: center;
    height: 30px;
    margin-right: 98px;
    padding: 3px 2px;
    border: 1px solid #aaa;
    border-width: 0 1px;
}
.find::before {
    content: "";
    width: 1px;
    height: 30px;
    margin: 0 42px 0 -45px;
    background-color: #aaa;
}
.find button {
    width: 27px;
    height: 24px;
    border: 1px solid #ccc;
    background-color: #fafafa;
}
.find .find-drop {
    width: 15px;
    background-color: #dcdcdc;
}
.find svg {
    width: 18px;
    height: 18px;
}
.filter-combo {
    width: 177px;
    margin-right: 18px;
}
.watermark {
    position: absolute;
    right: 0;
    bottom: 0;
    display: flex;
    gap: 1px;
    width: 207px;
    height: 63px;
    padding-top: 3px;
    background-color: rgba(255, 255, 255, 0.3);
    pointer-events: none;
}
.watermark svg {
    width: 58px;
    height: 56px;
}
.watermark-text {
    display: flex;
    flex-direction: column;
    color: #b9d3d8;
    font-size: 15px;
    line-height: 22px;
}
.watermark strong {
    padding-left: 10px;
    color: #8cc9a0;
    font-size: 30px;
    line-height: 34px;
}
```
FILE: script.js
```js
// Flutes run down the cylinder as a helix, sampled point by point
const FLUTES = 48;
const TWIST = 0.75;

function surfacePoint(angle, t) {
    const x = 1020 - 57 * t + 165 * Math.cos(angle);
    const y = 475 + 328 * t + 79 * Math.sin(angle) - 8 * Math.cos(angle);
    return [x, y];
}

function flutePath(offset) {
    let d = '';
    for (let i = 0; i < FLUTES; i++) {
        const start = (i / FLUTES) * Math.PI * 2 - Math.PI / 2;
        let pen = 'M';
        for (let t = 0; t <= 1.001; t += 0.05) {
            const angle = start + TWIST * t + offset;
            // only the front half is visible
            if (angle < 0 || angle > Math.PI) {
                pen = 'M';
                continue;
            }
            const [x, y] = surfacePoint(angle, t);
            d += pen + x.toFixed(1) + ' ' + y.toFixed(1);
            pen = 'L';
        }
    }
    return d;
}

document.getElementById('grooves').setAttribute('d', flutePath(0));
document.getElementById('ridges').setAttribute('d', flutePath(-0.014));

const handles = [
    [821, 415], [982, 391], [1143, 366], [1183, 443], [1222, 520], [1115, 535], [1060, 545],
    [899, 569], [860, 493], [791, 584], [762, 752], [870, 738], [924, 728], [1085, 703],
    [1192, 689], [1124, 781], [1163, 858], [1001, 883], [840, 907], [801, 829]
];
document.getElementById('handles').setAttribute('d',
    handles.map(([x, y]) => `M${x - 5} ${y - 5}h10v10h-10z`).join(''));
```
